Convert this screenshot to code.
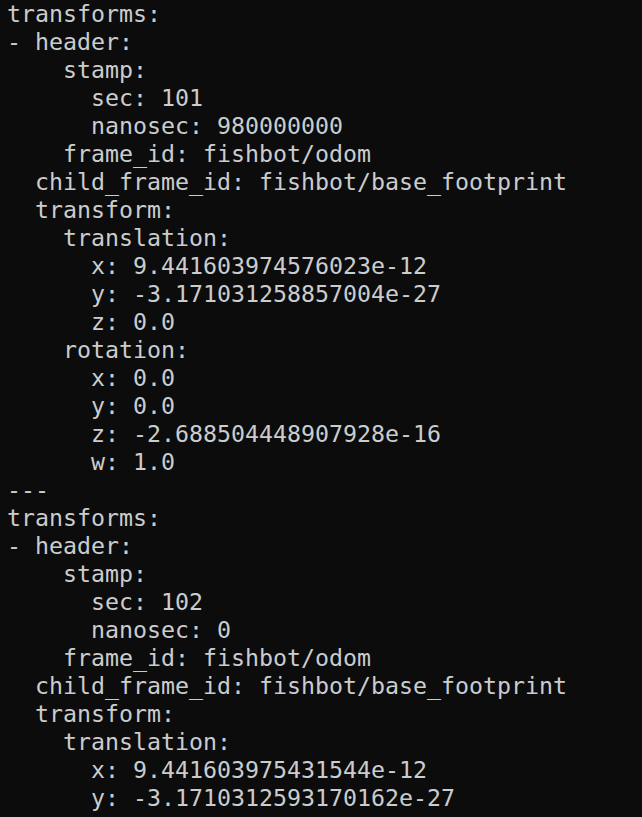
const lines = [
  'transforms:',
  '- header:',
  '    stamp:',
  '      sec: 101',
  '      nanosec: 980000000',
  '    frame_id: fishbot/odom',
  '  child_frame_id: fishbot/base_footprint',
  '  transform:',
  '    translation:',
  '      x: 9.441603974576023e-12',
  '      y: -3.171031258857004e-27',
  '      z: 0.0',
  '    rotation:',
  '      x: 0.0',
  '      y: 0.0',
  '      z: -2.688504448907928e-16',
  '      w: 1.0',
  '---',
  'transforms:',
  '- header:',
  '    stamp:',
  '      sec: 102',
  '      nanosec: 0',
  '    frame_id: fishbot/odom',
  '  child_frame_id: fishbot/base_footprint',
  '  transform:',
  '    translation:',
  '      x: 9.441603975431544e-12',
  '      y: -3.1710312593170162e-27',
];

export default function App() {
  return (
    <div className="w-[642px] h-[817px] overflow-hidden bg-[#0c0c0c] pl-[7px] text-[#cccccc] font-['DejaVu_Sans_Mono',monospace] text-[23.25px] leading-[28px]">
      {lines.map((line, i) => (
        <div key={i} className="whitespace-pre h-[28px]">
          {line}
        </div>
      ))}
    </div>
  );
}
